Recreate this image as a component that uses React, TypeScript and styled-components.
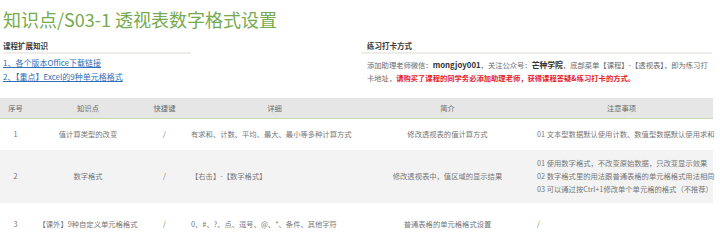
import styled, { createGlobalStyle } from "styled-components";

const GlobalStyle = createGlobalStyle`
    html, body {
        margin: 0;
        padding: 0;
        background: #ffffff;
    }
    body {
        font-family: "Noto Sans CJK SC", "Noto Sans", sans-serif;
        width: 720px;
        height: 250px;
        overflow: hidden;
    }
`;

const rows = [
    {
        id: 1,
        point: "值计算类型的改变",
        key: "/",
        detail: "有求和、计数、平均、最大、最小等多种计算方式",
        intro: "修改透视表的值计算方式",
        notes: ["01 文本型数据默认使用计数、数值型数据默认使用求和"],
        height: 31,
        shade: false,
    },
    {
        id: 2,
        point: "数字格式",
        key: "/",
        detail: "【右击】-【数字格式】",
        intro: "修改透视表中，值区域的显示结果",
        notes: [
            "01 使用数字格式，不改变原始数据，只改变显示效果",
            "02 数字格式里的用法跟普通表格的单元格格式用法相同",
            "03 可以通过按Ctrl+1修改单个单元格的格式（不推荐）",
        ],
        height: 53,
        shade: true,
    },
    {
        id: 3,
        point: "【课外】9种自定义单元格格式",
        key: "/",
        detail: "0、#、?、点、逗号、@、*、条件、其他字符",
        intro: "普通表格的单元格格式设置",
        notes: ["/"],
        height: 44,
        shade: false,
    },
];

const Page = styled.div`
    width: 720px;
`;

const Title = styled.h1`
    margin: 0;
    padding: 9px 0 0 3px;
    height: 31px;
    font-size: 18px;
    line-height: 20px;
    font-weight: 400;
    color: #76aa4f;
    white-space: nowrap;
`;

const Info = styled.div`
    display: flex;
    height: 58px;
    padding-left: 3px;
`;

const InfoColumn = styled.div<{ $width: number; $offset?: number }>`
    width: ${(p) => p.$width}px;
    margin-left: ${(p) => p.$offset || 0}px;
`;

const SectionHead = styled.div<{ $pull?: number }>`
    height: 12px;
    line-height: 12px;
    font-size: 7.5px;
    font-weight: 600;
    color: #3a3a3a;
    border-bottom: 2px solid #ededea;
    margin-left: -${(p) => p.$pull || 0}px;
    padding-left: ${(p) => p.$pull || 0}px;
`;

const LinkList = styled.div`
    display: flex;
    flex-direction: column;
    gap: 3px;
    padding-top: 3px;
`;

const Link = styled.a`
    font-size: 8px;
    line-height: 11px;
    color: #2f6fb8;
    text-decoration: underline;
    white-space: nowrap;
`;

const Para = styled.p`
    margin: 4px 0 0;
    font-size: 7.3px;
    line-height: 13px;
    color: #6a6a6a;
`;

const Strong = styled.b`
    color: #333333;
    font-weight: 700;
    font-size: 7.8px;
`;

const Alert = styled.b`
    color: #e5202a;
    font-weight: 700;
`;

const Table = styled.table`
    border-collapse: collapse;
    table-layout: fixed;
    width: 713px;
    font-size: 7.3px;
    color: #777777;
`;

const HeadCell = styled.th<{ $width: number }>`
    width: ${(p) => p.$width}px;
    height: 20px;
    padding: 0;
    background: #e6e6e6;
    border-bottom: 1px solid #c9dab2;
    font-weight: 400;
    color: #6a6a6a;
    text-align: center;
    vertical-align: middle;
    white-space: nowrap;
`;

const Row = styled.tr<{ $shade: boolean; $height: number }>`
    height: ${(p) => p.$height}px;
    background: ${(p) => (p.$shade ? "#f3f3f3" : "#ffffff")};
`;

const Cell = styled.td<{ $align?: "left" | "center" }>`
    padding: ${(p) => (p.$align === "left" ? "0 0 0 7px" : "0")};
    text-align: ${(p) => p.$align || "center"};
    vertical-align: middle;
    white-space: nowrap;
    line-height: 13px;
`;

const NoteLine = styled.div`
    white-space: nowrap;
`;

const columns = [
    { label: "序号", width: 31 },
    { label: "知识点", width: 114 },
    { label: "快捷键", width: 39 },
    { label: "详细", width: 181 },
    { label: "简介", width: 165 },
    { label: "注意事项", width: 183 },
];

const App = () => {
    return (
        <Page>
            <GlobalStyle />
            <Title>知识点/S03-1 透视表数字格式设置</Title>
            <Info>
                <InfoColumn $width={188}>
                    <SectionHead>课程扩展知识</SectionHead>
                    <LinkList>
                        <Link href="#">1、各个版本Office下载链接</Link>
                        <Link href="#">2、【重点】Excel的9种单元格格式</Link>
                    </LinkList>
                </InfoColumn>
                <InfoColumn $width={345} $offset={176}>
                    <SectionHead $pull={6}>练习打卡方式</SectionHead>
                    <Para>
                        添加助理老师微信：<Strong>mongjoy001</Strong>，关注公众号：
                        <Strong>芒种学院</Strong>，底部菜单【课程】-【透视表】，即为练习打卡地址，
                        <Alert>请购买了课程的同学务必添加助理老师，获得课程答疑&amp;练习打卡的方式。</Alert>
                    </Para>
                </InfoColumn>
            </Info>
            <Table>
                <thead>
                    <tr>
                        {columns.map((col) => (
                            <HeadCell key={col.label} $width={col.width}>
                                {col.label}
                            </HeadCell>
                        ))}
                    </tr>
                </thead>
                <tbody>
                    {rows.map((row) => (
                        <Row key={row.id} $shade={row.shade} $height={row.height}>
                            <Cell>{row.id}</Cell>
                            <Cell>{row.point}</Cell>
                            <Cell>{row.key}</Cell>
                            <Cell $align="left">{row.detail}</Cell>
                            <Cell>{row.intro}</Cell>
                            <Cell $align="left">
                                {row.notes.map((note) => (
                                    <NoteLine key={note}>{note}</NoteLine>
                                ))}
                            </Cell>
                        </Row>
                    ))}
                </tbody>
            </Table>
        </Page>
    );
};

export default App;
